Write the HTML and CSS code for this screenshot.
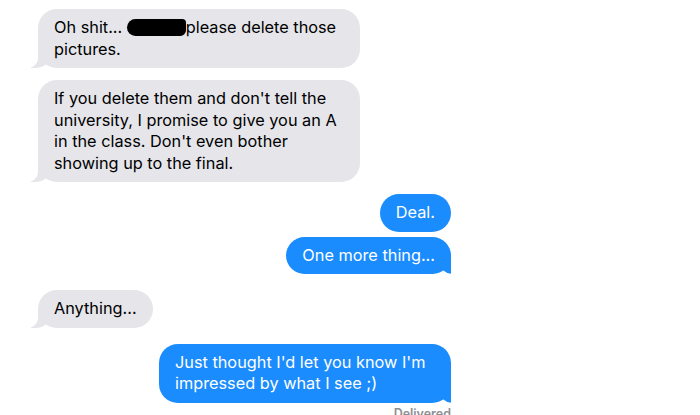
FILE: index.html
```html
<!DOCTYPE html>
<html lang="en">
<head>
  <meta charset="UTF-8">
  <meta name="viewport" content="width=device-width, initial-scale=1.0">
  <title>Messages</title>
  <link rel="stylesheet" href="styles.css">
</head>
<body>
  <div class="thread">
    <div class="msg them tail first">Oh shit... <span class="redact"></span>please delete those pictures.</div>
    <div class="msg them tail gap-sm">If you delete them and don't tell the university, I promise to give you an A in the class. Don't even bother showing up to the final.</div>
    <div class="msg me gap-sm">Deal.</div>
    <div class="msg me tail gap-xs">One more thing...</div>
    <div class="msg them tail gap-md">Anything...</div>
    <div class="msg me tail gap-md wide">Just thought I'd let you know I'm impressed by what I see ;)</div>
    <div class="status">Delivered</div>
  </div>
</body>
</html>
```

FILE: styles.css
```css
body {
  margin: 0;
  background: #fff;
  font-family: Inter, "Noto Sans", sans-serif;
}
.thread {
  width: 413px;
  padding: 0 0 0 38px;
  display: flex;
  flex-direction: column;
  overflow: hidden;
  height: 415px;
}
.msg {
  position: relative;
  max-width: 290px;
  padding: 8px 16px;
  border-radius: 19px;
  font-size: 16.3px;
  line-height: 21.5px;
}
.first {
  margin-top: 9px;
}
.gap-xs {
  margin-top: 5px;
}
.gap-sm {
  margin-top: 12px;
}
.gap-md {
  margin-top: 16px;
}
.them {
  align-self: flex-start;
  background: #e5e5ea;
  color: #000;
}
.me {
  align-self: flex-end;
  background: #1a8cfd;
  color: #fff;
}
.wide {
  max-width: 260px;
}

/* bubble tails */
.tail::before,
.tail::after {
  content: "";
  position: absolute;
  bottom: 0;
  height: 20px;
}
.them.tail::before {
  left: -7px;
  width: 20px;
  background: #e5e5ea;
  border-bottom-right-radius: 16px 14px;
}
.them.tail::after {
  left: -26px;
  width: 26px;
  background: #fff;
  border-bottom-right-radius: 10px;
}
.me.tail::before {
  right: -7px;
  width: 20px;
  background: #1a8cfd;
  border-bottom-left-radius: 16px 14px;
}
.me.tail::after {
  right: -26px;
  width: 26px;
  background: #fff;
  border-bottom-left-radius: 10px;
}

.redact {
  display: inline-block;
  width: 59px;
  height: 17px;
  vertical-align: -3px;
  background: #000;
  border-radius: 9px 4px 6px 9px;
}
.status {
  align-self: flex-end;
  margin-top: 3px;
  font-size: 12.5px;
  font-weight: 600;
  color: #8e8e93;
}
```
